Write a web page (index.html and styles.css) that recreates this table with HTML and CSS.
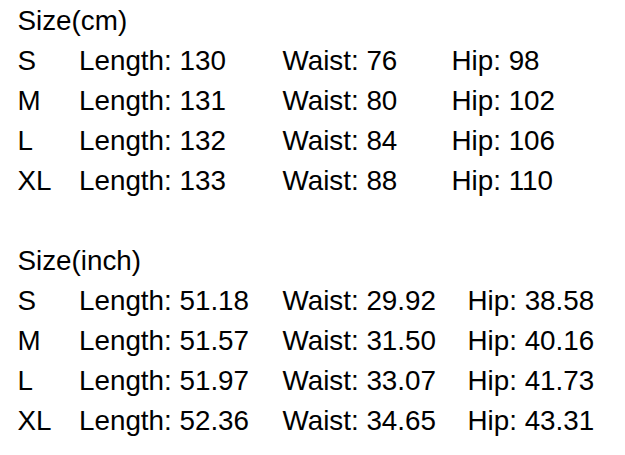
FILE: index.html
```html
<!DOCTYPE html>
<html>
<head>
<meta charset="utf-8">
<link rel="stylesheet" href="styles.css">
</head>
<body>
<div class="chart">
  <section class="block block-cm">
    <div class="title">Size(cm)</div>
    <div class="row"><span class="c-size">S</span><span class="c-len">Length: 130</span><span class="c-waist">Waist: 76</span><span class="c-hip">Hip: 98</span></div>
    <div class="row"><span class="c-size">M</span><span class="c-len">Length: 131</span><span class="c-waist">Waist: 80</span><span class="c-hip">Hip: 102</span></div>
    <div class="row"><span class="c-size">L</span><span class="c-len">Length: 132</span><span class="c-waist">Waist: 84</span><span class="c-hip">Hip: 106</span></div>
    <div class="row"><span class="c-size">XL</span><span class="c-len">Length: 133</span><span class="c-waist">Waist: 88</span><span class="c-hip">Hip: 110</span></div>
  </section>
  <section class="block block-inch">
    <div class="title">Size(inch)</div>
    <div class="row"><span class="c-size">S</span><span class="c-len">Length: 51.18</span><span class="c-waist">Waist: 29.92</span><span class="c-hip">Hip: 38.58</span></div>
    <div class="row"><span class="c-size">M</span><span class="c-len">Length: 51.57</span><span class="c-waist">Waist: 31.50</span><span class="c-hip">Hip: 40.16</span></div>
    <div class="row"><span class="c-size">L</span><span class="c-len">Length: 51.97</span><span class="c-waist">Waist: 33.07</span><span class="c-hip">Hip: 41.73</span></div>
    <div class="row"><span class="c-size">XL</span><span class="c-len">Length: 52.36</span><span class="c-waist">Waist: 34.65</span><span class="c-hip">Hip: 43.31</span></div>
  </section>
</div>
</body>
</html>
```
FILE: styles.css
```css
html, body {
  margin: 0;
  padding: 0;
  background: #fff;
}
body {
  font-family: "Liberation Sans", Arial, sans-serif;
  font-size: 27.8px;
  line-height: 40px;
  color: #000;
}
.chart {
  display: flex;
  flex-direction: column;
  gap: 40px;
  padding-left: 17.5px;
  padding-top: 0.5px;
}
.block {
  display: flex;
  flex-direction: column;
}
.row {
  display: flex;
  white-space: nowrap;
}
.c-size { width: 61.5px; }
.c-len { width: 203.5px; }
.block-cm .c-waist { width: 169px; }
.block-inch .c-waist { width: 185px; }
```
